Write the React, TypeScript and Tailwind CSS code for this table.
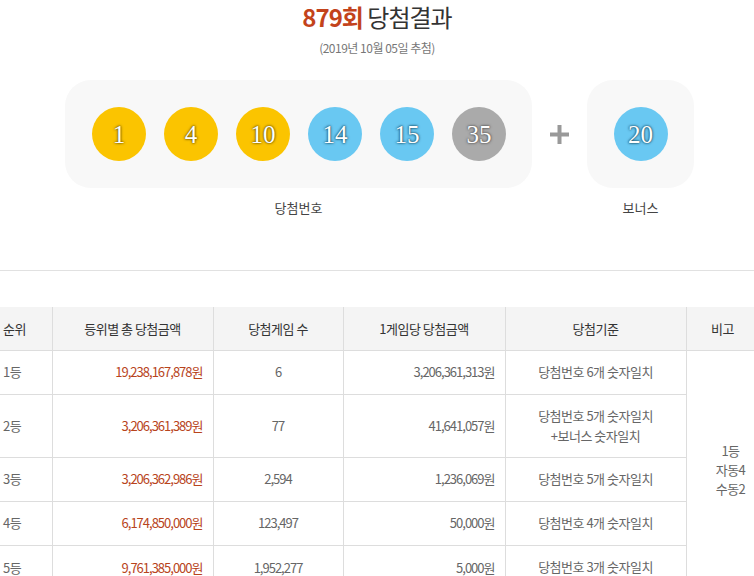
import * as React from "react"

type Ball = { n: number; color: "yellow" | "blue" | "gray" }

const balls: Ball[] = [
  { n: 1, color: "yellow" },
  { n: 4, color: "yellow" },
  { n: 10, color: "yellow" },
  { n: 14, color: "blue" },
  { n: 15, color: "blue" },
  { n: 35, color: "gray" },
]

const rows = [
  { rank: "1등", total: "19,238,167,878원", count: "6", per: "3,206,361,313원", rule: ["당첨번호 6개 숫자일치"], tall: false },
  { rank: "2등", total: "3,206,361,389원", count: "77", per: "41,641,057원", rule: ["당첨번호 5개 숫자일치", "+보너스 숫자일치"], tall: true },
  { rank: "3등", total: "3,206,362,986원", count: "2,594", per: "1,236,069원", rule: ["당첨번호 5개 숫자일치"], tall: false },
  { rank: "4등", total: "6,174,850,000원", count: "123,497", per: "50,000원", rule: ["당첨번호 4개 숫자일치"], tall: false },
  { rank: "5등", total: "9,761,385,000원", count: "1,952,277", per: "5,000원", rule: ["당첨번호 3개 숫자일치"], tall: false },
]

function LottoBall({ n, color }: Ball) {
  const cls =
    color === "yellow"
      ? "bg-[#fbc400] [text-shadow:0_0_2px_rgba(73,57,0,0.9),0_0_3px_rgba(73,57,0,0.7)]"
      : color === "blue"
      ? "bg-[#69c8f2] [text-shadow:0_0_2px_rgba(0,49,70,0.9),0_0_3px_rgba(0,49,70,0.7)]"
      : "bg-[#aaaaaa] [text-shadow:0_0_2px_rgba(61,61,61,0.9),0_0_3px_rgba(61,61,61,0.7)]"
  return (
    <span
      className={`${cls} w-[54px] h-[54px] rounded-full flex items-center justify-center text-white text-[25px] leading-none font-['Liberation_Serif',serif]`}
    >
      {n}
    </span>
  )
}

export default function App() {
  return (
    <div className="w-[754px] h-[576px] overflow-hidden bg-white font-['Noto_Sans_CJK_KR','Noto_Sans',sans-serif]">
      {/* title */}
      <div className="flex flex-col items-center pt-[2px]">
        <h4 className="text-[24px] leading-[30px] text-[#333] tracking-[-1px]">
          <strong className="text-[#c3431b] font-bold">879회</strong> 당첨결과
        </h4>
        <p className="text-[12px] leading-[16px] mt-[8px] text-[#777] tracking-[-0.5px]">(2019년 10월 05일 추첨)</p>
      </div>

      {/* balls */}
      <div className="flex justify-center items-start mt-[24px] pl-[5px]">
        <div className="flex flex-col items-center">
          <div className="w-[467px] h-[108px] rounded-[26px] bg-[#f8f8f8] flex items-center gap-[18px] pl-[27px]">
            {balls.map((b) => (
              <LottoBall key={b.n} {...b} />
            ))}
          </div>
          <span className="mt-[11px] text-[13px] leading-[18px] text-[#444]">당첨번호</span>
        </div>
        <div className="w-[55px] h-[108px] flex items-center justify-center">
          <svg width="19" height="19" viewBox="0 0 19 19">
            <rect x="0" y="7.5" width="19" height="4" fill="#999" />
            <rect x="7.5" y="0" width="4" height="19" fill="#999" />
          </svg>
        </div>
        <div className="flex flex-col items-center">
          <div className="w-[107px] h-[108px] rounded-[26px] bg-[#f8f8f8] flex items-center justify-center">
            <LottoBall n={20} color="blue" />
          </div>
          <span className="mt-[11px] text-[13px] leading-[18px] text-[#444]">보너스</span>
        </div>
      </div>

      <div className="mt-[53px] h-px bg-[#e1e1e1]" />

      {/* table */}
      <div className="mt-[36px] w-[754px] overflow-hidden">
        <table className="w-[782px] min-w-[782px] table-fixed border-collapse text-[13px] tracking-[-0.5px]">
          <thead>
            <tr className="h-[43px] bg-[#f4f4f4] text-[#333]">
              <th className="w-[52px] font-normal text-left pl-[3px] border-r border-[#ddd]">순위</th>
              <th className="w-[161px] font-normal border-x border-[#ddd]">등위별 총 당첨금액</th>
              <th className="w-[130px] font-normal border-x border-[#ddd]">당첨게임 수</th>
              <th className="w-[162px] font-normal border-x border-[#ddd]">1게임당 당첨금액</th>
              <th className="w-[181px] font-normal border-x border-[#ddd]">당첨기준</th>
              <th className="w-[96px] font-normal border-l border-[#ddd] pr-[48px] text-right">비고</th>
            </tr>
          </thead>
          <tbody className="text-[#666]">
            {rows.map((r, i) => (
              <tr key={r.rank} className={`${r.tall ? "h-[63px]" : "h-[44px]"} border-t border-[#ddd]`}>
                <td className="text-left pl-[3px] border-r border-[#ddd]">{r.rank}</td>
                <td className="text-right pr-[10px] text-[#b8441c] tracking-[-1px] border-x border-[#ddd]">{r.total}</td>
                <td className="text-center tracking-[-1px] border-x border-[#ddd]">{r.count}</td>
                <td className="text-right pr-[10px] tracking-[-1px] border-x border-[#ddd]">{r.per}</td>
                <td className="text-center leading-[20px] border-x border-[#ddd]">
                  {r.rule.map((l) => (
                    <div key={l}>{l}</div>
                  ))}
                </td>
                {i === 0 && (
                  <td rowSpan={5} className="text-center leading-[19px] border-l border-[#ddd] pr-[50px]">
                    <div className="w-[46px] ml-[21px]">
                      <div>1등</div>
                      <div>자동4</div>
                      <div>수동2</div>
                    </div>
                  </td>
                )}
              </tr>
            ))}
          </tbody>
        </table>
      </div>
    </div>
  )
}
